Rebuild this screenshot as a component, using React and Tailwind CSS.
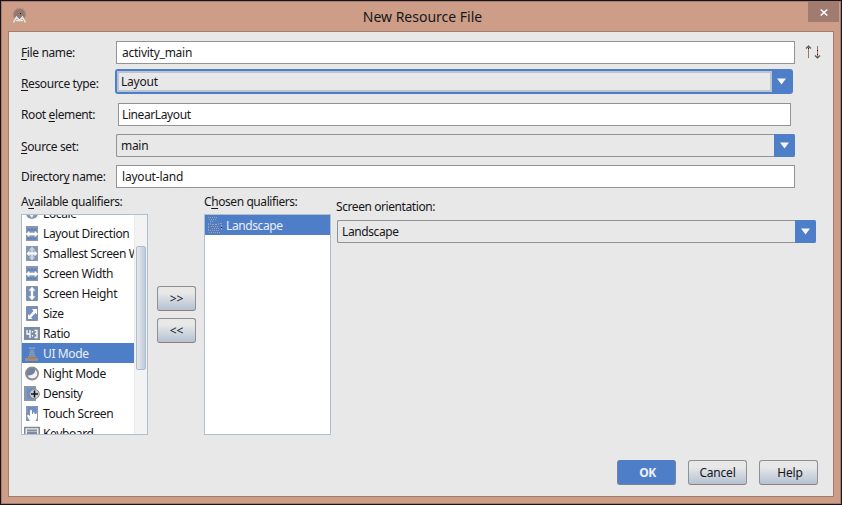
import React from "react";

const U = ({ children }) => (
  <span className="underline decoration-1 underline-offset-2 [text-decoration-skip-ink:none]">{children}</span>
);

const Triangle = () => (
  <svg width="9" height="7" viewBox="0 0 9 7"><path d="M0 .5h9L4.5 6.5z" fill="#f4f6fa" /></svg>
);

function Combo({ className = "", children }) {
  return (
    <div className={"flex h-[23px] rounded-[2px] border border-r-0 border-[#919397] " + className}>
      <div className="flex-1 pl-1 leading-[22px]">{children}</div>
      <div className="-my-px w-[21px] rounded-r-[2px] bg-[#4e7ec7] flex items-center justify-center"><Triangle /></div>
    </div>
  );
}

function Field({ className = "", children }) {
  return <div className={"h-[23px] border border-[#919397] bg-white leading-[22px] " + className}>{children}</div>;
}

function Label({ className = "w-[95px]", children }) {
  return <div className={"shrink-0 h-[23px] leading-[23px] tracking-[-0.38px] " + className}>{children}</div>;
}

function Button({ className = "", children }) {
  return (
    <div className={"h-[25px] rounded-[3px] border border-[#8d9095] border-b-[#977d76] bg-linear-to-b from-[#e8e8e8] from-25% to-[#b5c2d3] text-center leading-[24px] " + className}>
      {children}
    </div>
  );
}

const icons = {
  locale: <g><circle cx="8" cy="8" r="6" fill="#8995a8" /><path d="M5 3l3 2 2 4-2 4-4-5z" fill="#eef1f5" /></g>,
  horizontal: <g><path d="M2 1h12v15H2z" fill="#8a97aa" /><path d="M3 3h10v3H3zM3 12h10v3H3z" fill="#6c8dc0" /><path d="M4 4.500h9M3 13.500h9" stroke="#4e7ec7" strokeDasharray="2 1" /><path d="M2 9l3-2.500V8h6V6.500L14 9l-3 2.500V10H5v1.500z" fill="#fff" stroke="#fff" strokeWidth=".6" /></g>,
  smallest: <g><path d="M2 1h12v15H2z" fill="#8a97aa" /><path d="M8 1.500L11 5H9.500v7H11l-3 3.500L5 12h1.500V5H5z" fill="#c6d4ea" /><path d="M2.500 8.500l3-3v2h5v-2l3 3-3 3v-2h-5v2z" fill="#fff" /></g>,
  height: <g><path d="M2.500 1.500h11v14h-11z" fill="#7591bb" stroke="#8a8f98" /><path d="M8 2L11 5.500H9v6h2L8 15 5 11.500h2v-6H5z" fill="#fff" stroke="#fff" strokeWidth=".4" /></g>,
  size: <g><path d="M2.500 1.500h11v14h-11z" fill="#7290be" stroke="#8a8f98" /><path d="M4 14V9l1.500 1.500 4-4.500L8 4h5v5.500L11.500 8l-4.500 4.500L8.500 14z" fill="#fff" /></g>,
  ratio: <g><path d="M0 2h16v13H0z" fill="#7c8ca5" /><path d="M3 5v4h3.500M6 5v8M8.500 6v1.500M8.500 10v1.500M10.500 5.500H13v3h-2H13v4h-2.500" fill="none" stroke="#fff" strokeWidth="1.300" /></g>,
  ui: <g><path d="M5 2h6v2H5zM6 5h4l1 6H5z" fill="#899cb6" /><path d="M7 2v9M9 2v9" stroke="#4e7ec7" strokeDasharray="1 1" /><path d="M4 11h8v2h2v3H1v-3h3z" fill="#a48a82" /><path d="M5 13h7" stroke="#7e797d" /></g>,
  night: <g><circle cx="8" cy="8.500" r="6.200" fill="#6f84a5" stroke="#9a8984" strokeWidth="1.500" /><path d="M11 4.500c.5 3.500-2 6-7.500 6 2 4 7.500 4 9.500 0 .8-2.500 0-4.500-2-6z" fill="#f4f4f4" /></g>,
  density: <g><path d="M0 1h12v15H0z" fill="#8a97aa" /><path d="M3 3h7v11H3z" fill="#6c8fc8" /><circle cx="10.500" cy="9" r="4.800" fill="#c9cdd5" stroke="#8c8c90" /><path d="M10.500 5.500v7M7 9h7" stroke="#17171b" strokeWidth="1.600" /></g>,
  touch: <g><path d="M2 1h12v15H2z" fill="#8a97aa" /><path d="M4 2h8v9H4z" fill="#6c8fc8" /><path d="M6 16l-3-5 1-1.500L6 11V5.500q1-1.500 2 0V9h1V7.500h1.500V9H12v-.5h1V13l-1.500 3z" fill="#fff" /></g>,
  keyboard: <g><path d="M.75 2.500h14.500v12H.75z" fill="#eceef1" stroke="#85888e" strokeWidth="1.500" /><path d="M3 5.500h10M3 8h10" stroke="#7d8ba0" strokeWidth="2" /><path d="M3 10.500h10" stroke="#6086c3" /></g>,
};

const Icon = ({ name }) => <svg className="shrink-0" width="16" height="17" viewBox="0 0 16 17">{icons[name]}</svg>;

const qualifiers = [
  ["locale", "Locale"],
  ["horizontal", "Layout Direction"],
  ["smallest", "Smallest Screen Width"],
  ["horizontal", "Screen Width"],
  ["height", "Screen Height"],
  ["size", "Size"],
  ["ratio", "Ratio"],
  ["ui", "UI Mode"],
  ["night", "Night Mode"],
  ["density", "Density"],
  ["touch", "Touch Screen"],
  ["keyboard", "Keyboard"],
];

export default function App() {
  return (
    <div className="w-[842px] h-[505px] overflow-hidden border border-[#17131a] bg-[#cd9d87] font-['Noto_Sans','Open_Sans',sans-serif] text-[12px] text-[#17171b] whitespace-nowrap">
      <div className="h-[503px] border border-[#a37d70] px-[6px]">
        <header className="flex h-[29px]">
          <svg className="mt-[5px] ml-[3px] w-[17px] h-[17px]" viewBox="0 0 17 17">
            <circle cx="8.500" cy="7.500" r="6" fill="#96776d" stroke="#a48c84" strokeWidth="1.500" strokeDasharray="2 1" />
            <path d="M7 3h3M3 7h2M12 7h2M6 10h4" stroke="#83828a" />
            <path d="M2.500 15.500l3-5.500 3 3.500 3-3.500 3 5.500M5 13.500h7" fill="none" stroke="#e6e6e6" strokeWidth="1.500" />
            <path d="M9 6h1v1H9z" fill="#111" />
          </svg>
          <div className="flex-1 pl-[9px] text-center text-[14px] leading-[29px]">New Resource File</div>
          <div className="-mr-[5px] h-[20px] w-[31px] bg-[#a07b6f] flex items-center justify-center">
            <svg width="8" height="7" viewBox="0 0 8 7"><path d="M.7.5l6.600 6M7.300.5l-6.600 6" stroke="#fff" strokeWidth="1.500" /></svg>
          </div>
        </header>
        <main className="h-[466px] w-[826px] border border-[#a07c6f] bg-[#e8e8e8] pl-[12px]">
          <div className="mt-[9px] flex">
            <Label><U>F</U>ile name:</Label>
            <Field className="w-[679px] pl-[5px] tracking-[-0.25px]">activity_main</Field>
            <svg className="ml-[9px] mt-[4px]" width="17" height="14" viewBox="0 0 17 14">
              <path d="M4.500 2v11M13.500 1v11" stroke="#a07668" />
              <path d="M2 3.500L4.500 1 7 3.500M11 10.500l2.500 2.500 2.500-2.500" fill="none" stroke="#555" strokeWidth="1.200" />
              <path d="M4 3h1v1H4zM13 5h1v1h-1zM13 9h1v1h-1z" fill="#111" />
            </svg>
          </div>
          <div className="mt-[5px] flex h-[25px]">
            <Label className="w-[94px] pt-[3px]"><U>R</U>esource type:</Label>
            <div className="flex w-[678px] rounded-[3px] border-2 border-[#4e7ec7]">
              <div className="flex-1 border-2 border-[#b9c5d5] pl-[2px] leading-[18px] tracking-[-0.2px]">Layout</div>
              <div className="w-[19px] bg-[#4e7ec7] flex items-center justify-center"><Triangle /></div>
            </div>
          </div>
          <div className="mt-[9px] flex">
            <Label className="w-[97px]">Root <U>e</U>lement:</Label>
            <Field className="w-[673px] pl-[3px] tracking-[-0.4px]">LinearLayout</Field>
          </div>
          <div className="mt-[8px] flex h-[23px]">
            <Label className="w-[95px] pt-px"><U>S</U>ource set:</Label>
            <Combo className="w-[679px] tracking-[-0.3px]">main</Combo>
          </div>
          <div className="mt-[8px] flex">
            <Label>Director<U>y</U> name:</Label>
            <Field className="w-[679px] pl-[5px] tracking-[-0.2px]">layout-land</Field>
          </div>
          <div className="mt-[4px] flex h-[244px]">
            <section className="w-[127px]">
              <div className="h-[22px] leading-[20px] tracking-[-0.38px]">A<U>v</U>ailable qualifiers:</div>
              <div className="flex h-[221px] border border-[#b0bfd0] bg-white overflow-hidden">
                <div className="w-[112px] overflow-hidden">
                  <div className="-mt-[12px]">
                    {qualifiers.map(([icon, name]) => (
                      <div key={name} className={"flex h-[20px] items-center gap-[3px] pl-[2px] " + (icon === "ui" ? "bg-[#4e7ec7] text-[#edf0f5]" : "")}>
                        <Icon name={icon} /><span className="leading-[18px] pt-[2px] tracking-[-0.38px]">{name}</span>
                      </div>
                    ))}
                  </div>
                </div>
                <div className="w-[13px] bg-[#f3f3f3] border-l border-[#ebebeb] pt-[31px] pl-px">
                  <div className="w-[10px] h-[124px] rounded-[2px] border border-[#adbdd0] bg-linear-to-r from-[#e7e9eb] to-[#bfcbd9]" />
                </div>
              </div>
            </section>
            <div className="ml-[9px] w-[39px] pt-[94px]">
              <Button>&gt;&gt;</Button>
              <Button className="mt-[7px]">&lt;&lt;</Button>
            </div>
            <section className="ml-[8px] w-[127px]">
              <div className="h-[22px] leading-[20px] tracking-[-0.42px]">C<U>h</U>osen qualifiers:</div>
              <div className="h-[221px] border border-[#b0bfd0] bg-white">
                <div className="flex h-[20px] items-center gap-[3px] bg-[#4e7ec7] pl-[2px] text-[#edf0f5]">
                  <svg width="16" height="18" viewBox="0 0 16 18" fill="none" stroke="#a9a29c">
                    <path d="M1 1.500h9M2 3.500h7M3 5.500h4" strokeDasharray="1 1" />
                    <path d="M1.500 15V7.500h2v1h8v-1h3V15" strokeDasharray="2 1" />
                    <path d="M4 10.500h8M5 12.500h7M3 14.500h10M2 16.500h12" strokeDasharray="1 1" />
                    <path d="M14 11h1v1h-1z" fill="#17171b" stroke="none" />
                  </svg>
                  <span className="leading-[18px] pt-[2px] tracking-[-0.4px]">Landscape</span>
                </div>
              </div>
            </section>
            <section className="ml-[6px] pt-[5px] w-[479px]">
              <div className="h-[23px] leading-[20px] -ml-px tracking-[-0.42px]">Screen orientation:</div>
              <Combo className="tracking-[-0.4px]">Landscape</Combo>
            </section>
          </div>
          <footer className="mt-[24px] mr-[15px] flex justify-end gap-[12px]">
            <div className="h-[25px] w-[59px] rounded-[3px] border border-[#7484a0] border-t-[#4e7ec7] bg-[#4e7ec7] pl-[2px] text-center font-bold leading-[24px] tracking-[-0.4px] text-[#edf0f5]">OK</div>
            <Button className="w-[59px] tracking-[-0.2px]">Cancel</Button>
            <Button className="w-[59px] pl-[3px] tracking-[-0.2px]">Help</Button>
          </footer>
        </main>
      </div>
    </div>
  );
}
